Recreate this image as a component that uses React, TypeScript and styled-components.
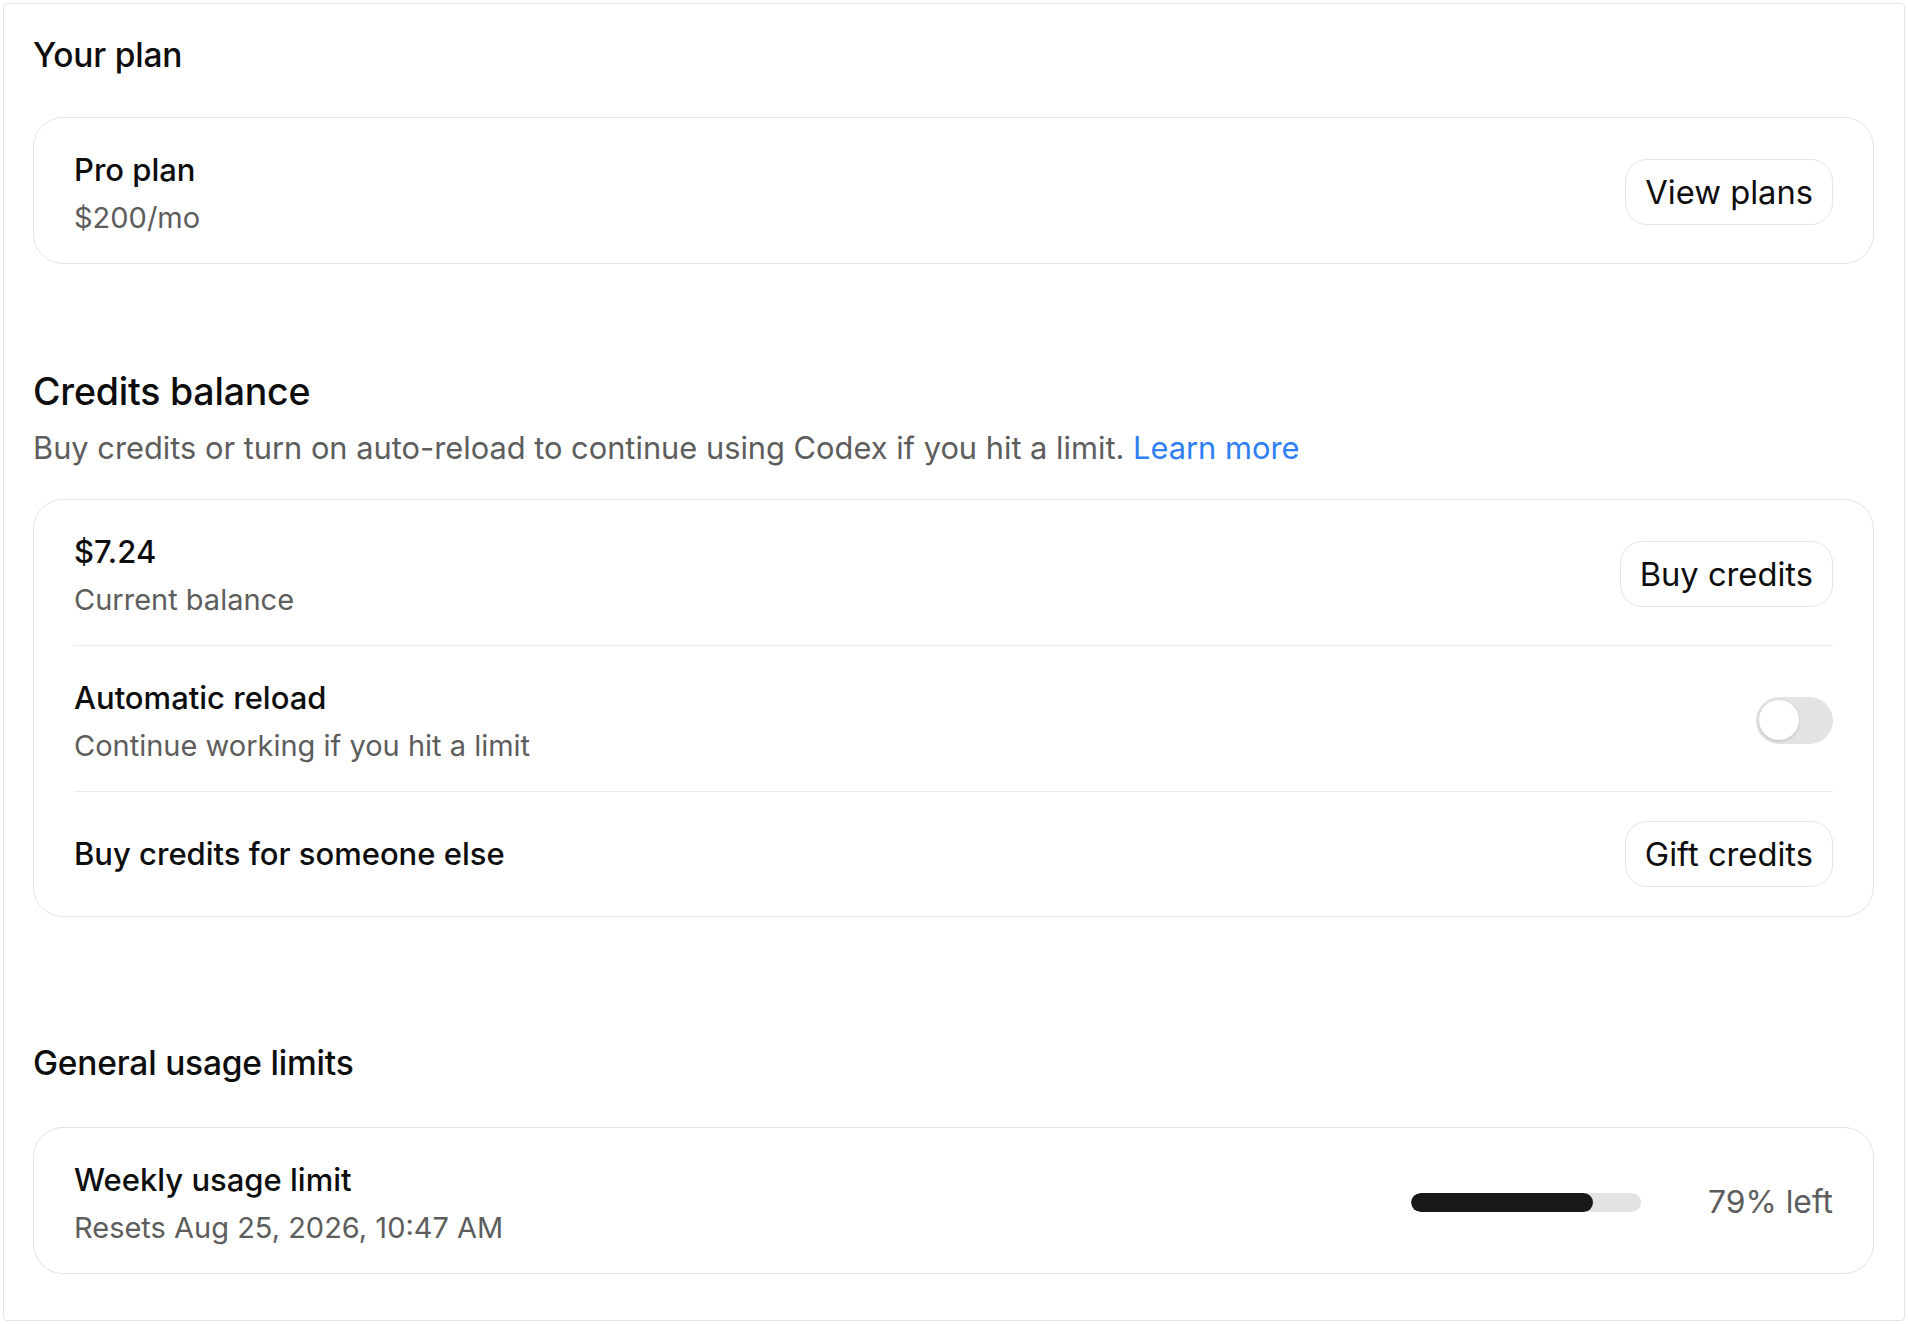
import styled, { createGlobalStyle } from "styled-components";

const GlobalStyle = createGlobalStyle`
  html, body {
    margin: 0;
    padding: 0;
    background: #ffffff;
  }
  body {
    font-family: Inter, "Noto Sans", "Liberation Sans", sans-serif;
    color: #0d0d0d;
    -webkit-font-smoothing: antialiased;
  }
`;

const Page = styled.div`
  padding: 3px;
  width: 1908px;
  height: 1324px;
  box-sizing: border-box;
`;

const Frame = styled.div`
  height: 100%;
  box-sizing: border-box;
  border: 1px solid #e4e4e4;
  border-radius: 4px;
  padding: 29px 30px 0 29px;
  display: flex;
  flex-direction: column;
`;

const Section = styled.section<{ $top?: number }>`
  display: flex;
  flex-direction: column;
  margin-top: ${(p) => p.$top ?? 0}px;
`;

const SectionTitle = styled.h2<{ $large?: boolean; $gap: number }>`
  margin: 0 0 ${(p) => p.$gap}px;
  font-size: ${(p) => (p.$large ? 37.5 : 33.5)}px;
  line-height: ${(p) => (p.$large ? 48 : 44)}px;
  font-weight: 500;
  letter-spacing: -0.2px;
  color: #0d0d0d;
`;

const SectionText = styled.p`
  margin: 12px 0 31px;
  font-size: 30.8px;
  line-height: 40px;
  color: #5d5d5d;
`;

const Link = styled.a`
  color: #2f80f5;
  text-decoration: none;
  cursor: pointer;
`;

const Card = styled.div`
  border: 1px solid #e4e4e4;
  border-radius: 30px;
  padding: 0 40px;
  display: flex;
  flex-direction: column;
`;

const Row = styled.div<{ $single?: boolean }>`
  display: flex;
  align-items: center;
  justify-content: space-between;
  padding: ${(p) => (p.$single ? "29px 0" : "28px 0 25px")};
  border-bottom: 1px solid #ececec;

  &:last-child {
    border-bottom: none;
  }
`;

const Info = styled.div`
  display: flex;
  flex-direction: column;
  gap: 8px;
  padding-top: 4px;
`;

const Title = styled.div`
  font-size: 31px;
  line-height: 40px;
  font-weight: 500;
  color: #0d0d0d;
`;

const Sub = styled.div`
  font-size: 29px;
  line-height: 40px;
  color: #5d5d5d;
`;

const Button = styled.button`
  height: 66px;
  padding: 0 19px;
  border: 1px solid #e4e4e4;
  border-radius: 22px;
  background: #ffffff;
  font-family: inherit;
  font-size: 32.7px;
  font-weight: 400;
  color: #0d0d0d;
  cursor: pointer;
`;

const Toggle = styled.div<{ $on?: boolean }>`
  width: 77px;
  height: 47px;
  border-radius: 24px;
  background: ${(p) => (p.$on ? "#0d0d0d" : "#e3e3e6")};
  display: flex;
  align-items: center;
  padding: 0 3px;
  box-sizing: border-box;
  justify-content: ${(p) => (p.$on ? "flex-end" : "flex-start")};
`;

const Knob = styled.div`
  width: 40px;
  height: 40px;
  border-radius: 50%;
  background: #ffffff;
  box-shadow: 0 1px 3px rgba(0, 0, 0, 0.18);
`;

const Meter = styled.div`
  display: flex;
  align-items: center;
  gap: 67px;
`;

const Track = styled.div`
  width: 230px;
  height: 19px;
  border-radius: 10px;
  background: #e3e3e6;
  overflow: hidden;
`;

const Fill = styled.div`
  height: 100%;
  border-radius: 10px;
  background: #18181a;
`;

const MeterLabel = styled.span`
  font-size: 31.8px;
  line-height: 40px;
  color: #5d5d5d;
`;

export default function App() {
  const left = 79;

  return (
    <>
      <GlobalStyle />
      <Page>
        <Frame>
          <Section>
            <SectionTitle $gap={40}>Your plan</SectionTitle>
            <Card>
              <Row>
                <Info>
                  <Title>Pro plan</Title>
                  <Sub>$200/mo</Sub>
                </Info>
                <Button>View plans</Button>
              </Row>
            </Card>
          </Section>

          <Section $top={104}>
            <SectionTitle $large $gap={0}>Credits balance</SectionTitle>
            <SectionText>
              Buy credits or turn on auto-reload to continue using Codex if you hit a limit.{" "}
              <Link>Learn more</Link>
            </SectionText>
            <Card>
              <Row>
                <Info>
                  <Title>$7.24</Title>
                  <Sub>Current balance</Sub>
                </Info>
                <Button>Buy credits</Button>
              </Row>
              <Row>
                <Info>
                  <Title>Automatic reload</Title>
                  <Sub>Continue working if you hit a limit</Sub>
                </Info>
                <Toggle>
                  <Knob />
                </Toggle>
              </Row>
              <Row $single>
                <Title>Buy credits for someone else</Title>
                <Button>Gift credits</Button>
              </Row>
            </Card>
          </Section>

          <Section $top={124}>
            <SectionTitle $gap={42}>General usage limits</SectionTitle>
            <Card>
              <Row>
                <Info>
                  <Title>Weekly usage limit</Title>
                  <Sub>Resets Aug 25, 2026, 10:47 AM</Sub>
                </Info>
                <Meter>
                  <Track>
                    <Fill style={{ width: `${left}%` }} />
                  </Track>
                  <MeterLabel>{left}% left</MeterLabel>
                </Meter>
              </Row>
            </Card>
          </Section>
        </Frame>
      </Page>
    </>
  );
}
